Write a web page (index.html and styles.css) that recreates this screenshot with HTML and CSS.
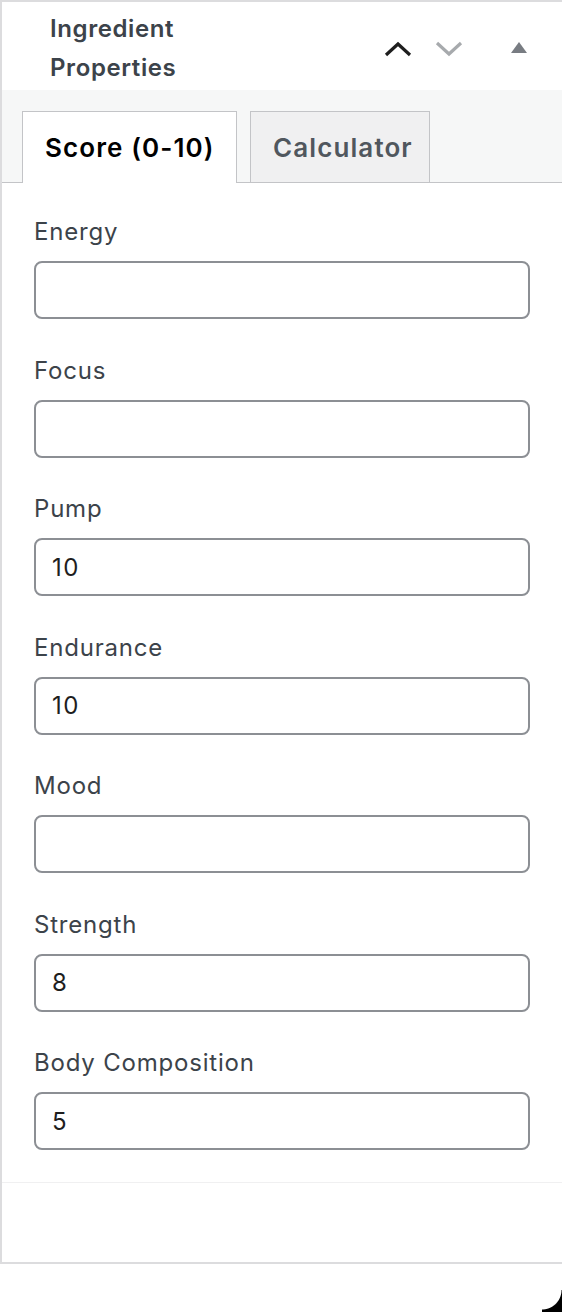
FILE: index.html
```html
<!DOCTYPE html>
<html>
<head>
<meta charset="utf-8">
<link rel="stylesheet" href="styles.css">
</head>
<body>
<div class="panel">
  <div class="header">
    <h2 class="title">Ingredient<br>Properties</h2>
    <div class="actions">
      <span class="icon up"><svg width="28" height="16" viewBox="0 0 28 16"><path d="M2 14 L14 3 L26 14" fill="none" stroke="#1e1e1e" stroke-width="3.2"/></svg></span>
      <span class="icon down"><svg width="28" height="16" viewBox="0 0 28 16"><path d="M2 2 L14 13 L26 2" fill="none" stroke="#a7aaad" stroke-width="3.2"/></svg></span>
      <span class="icon tri"><svg width="16" height="11" viewBox="0 0 16 11"><path d="M8 0 L16 11 L0 11 Z" fill="#787c82"/></svg></span>
    </div>
  </div>
  <div class="tabs">
    <div class="tab active">Score (0-10)</div>
    <div class="tab">Calculator</div>
  </div>
  <div class="fields">
    <div class="field"><label class="label">Energy</label><div class="input"></div></div>
    <div class="field"><label class="label">Focus</label><div class="input"></div></div>
    <div class="field"><label class="label">Pump</label><div class="input">10</div></div>
    <div class="field"><label class="label">Endurance</label><div class="input">10</div></div>
    <div class="field"><label class="label">Mood</label><div class="input"></div></div>
    <div class="field"><label class="label">Strength</label><div class="input">8</div></div>
    <div class="field"><label class="label">Body Composition</label><div class="input">5</div></div>
  </div>
  <div class="footer"></div>
</div>
<div class="corner"></div>
</body>
</html>
```
FILE: styles.css
```css
html, body {
  margin: 0;
  padding: 0;
  background: #fff;
}
body {
  font-family: Inter, "Noto Sans", "Liberation Sans", sans-serif;
  width: 562px;
  height: 1312px;
  position: relative;
  overflow: hidden;
}
.panel {
  border-top: 2px solid #dcdcde;
  border-left: 2px solid #dcdcde;
  border-bottom: 2px solid #dcdcde;
  background: #fff;
}
.header {
  height: 88px;
  display: flex;
  align-items: flex-start;
  justify-content: space-between;
  box-sizing: border-box;
  padding: 7px 0 0 48px;
}
.title {
  margin: 0;
  font-size: 24px;
  line-height: 39px;
  font-weight: 600;
  letter-spacing: 0.6px;
  color: #3c434a;
}
.actions {
  display: flex;
  align-items: center;
  height: 16px;
  margin-top: 32px;
  padding-right: 35px;
}
.icon { display: flex; align-items: center; }
.icon.up { margin-right: 23px; }
.icon.down { margin-right: 48px; }
.icon.tri { margin-top: -4px; }
.tabs {
  background: #f6f7f7;
  padding: 21px 0 0 20px;
  display: flex;
  gap: 13px;
  border-bottom: 1px solid #c3c4c7;
  height: 71px;
  box-sizing: content-box;
}
.tab {
  height: 71px;
  box-sizing: border-box;
  border: 1px solid #c3c4c7;
  border-bottom: none;
  background: #f0f0f1;
  color: #50575e;
  font-size: 26px;
  font-weight: 600;
  letter-spacing: 1.1px;
  display: flex;
  align-items: center;
  padding: 0 16px 0 22px;
}
.tab.active {
  background: #fff;
  color: #000;
  height: 72px;
  margin-bottom: -1px;
  width: 215px;
  padding-left: 22px;
  padding-right: 0;
}
.fields {
  padding: 34px 32px 32px 32px;
  display: flex;
  flex-direction: column;
  gap: 36.5px;
  border-bottom: 1px solid #f0f0f1;
}
.field {
  display: flex;
  flex-direction: column;
}
.label {
  font-size: 24px;
  line-height: 30px;
  letter-spacing: 0.8px;
  color: #3c434a;
  margin-bottom: 14px;
}
.input {
  height: 58px;
  box-sizing: border-box;
  border: 2px solid #8c8f94;
  border-radius: 8px;
  font-size: 24px;
  letter-spacing: 1.5px;
  color: #1e1e1e;
  display: flex;
  align-items: center;
  padding-left: 16px;
}
.footer {
  height: 79px;
}
.corner {
  position: absolute;
  right: 0;
  bottom: 0;
  width: 20px;
  height: 22px;
  background: radial-gradient(circle at 0 0, transparent 19px, #000 20px);
}
```
